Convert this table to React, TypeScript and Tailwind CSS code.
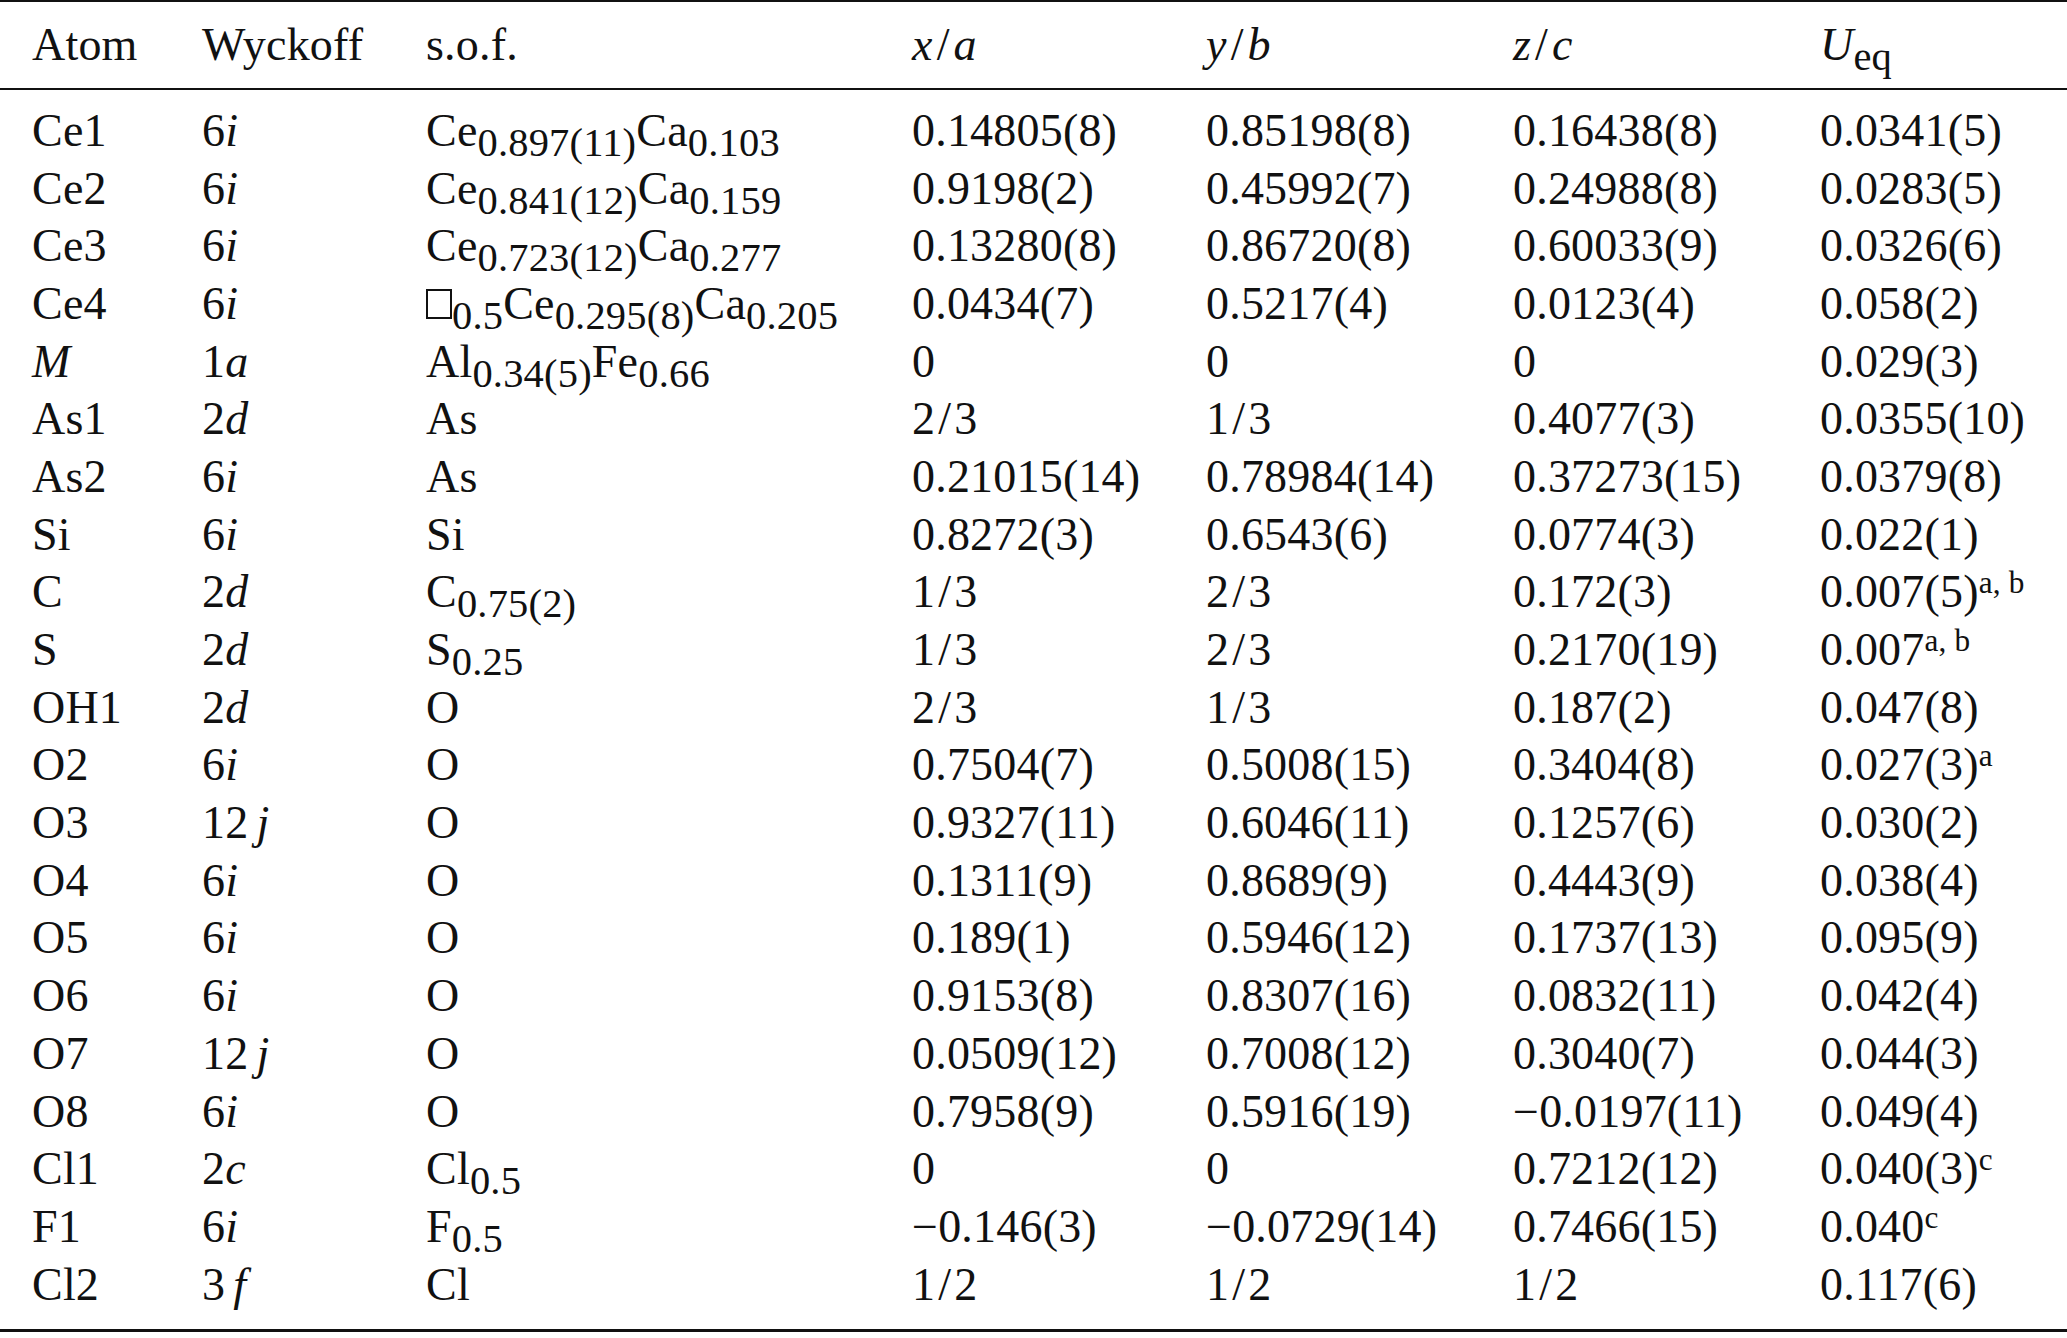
import React from "react"

type Part = [string, string?]
type Row = {
  atom: string
  italicAtom?: boolean
  wyck: [string, string]
  sof: (Part | "box")[]
  x: string
  y: string
  z: string
  u: string
  sup?: string
}

const rows: Row[] = [
  { atom: "Ce1", wyck: ["6", "i"], sof: [["Ce", "0.897(11)"], ["Ca", "0.103"]], x: "0.14805(8)", y: "0.85198(8)", z: "0.16438(8)", u: "0.0341(5)" },
  { atom: "Ce2", wyck: ["6", "i"], sof: [["Ce", "0.841(12)"], ["Ca", "0.159"]], x: "0.9198(2)", y: "0.45992(7)", z: "0.24988(8)", u: "0.0283(5)" },
  { atom: "Ce3", wyck: ["6", "i"], sof: [["Ce", "0.723(12)"], ["Ca", "0.277"]], x: "0.13280(8)", y: "0.86720(8)", z: "0.60033(9)", u: "0.0326(6)" },
  { atom: "Ce4", wyck: ["6", "i"], sof: ["box", ["Ce", "0.295(8)"], ["Ca", "0.205"]], x: "0.0434(7)", y: "0.5217(4)", z: "0.0123(4)", u: "0.058(2)" },
  { atom: "M", italicAtom: true, wyck: ["1", "a"], sof: [["Al", "0.34(5)"], ["Fe", "0.66"]], x: "0", y: "0", z: "0", u: "0.029(3)" },
  { atom: "As1", wyck: ["2", "d"], sof: [["As"]], x: "2/3", y: "1/3", z: "0.4077(3)", u: "0.0355(10)" },
  { atom: "As2", wyck: ["6", "i"], sof: [["As"]], x: "0.21015(14)", y: "0.78984(14)", z: "0.37273(15)", u: "0.0379(8)" },
  { atom: "Si", wyck: ["6", "i"], sof: [["Si"]], x: "0.8272(3)", y: "0.6543(6)", z: "0.0774(3)", u: "0.022(1)" },
  { atom: "C", wyck: ["2", "d"], sof: [["C", "0.75(2)"]], x: "1/3", y: "2/3", z: "0.172(3)", u: "0.007(5)", sup: "a,b" },
  { atom: "S", wyck: ["2", "d"], sof: [["S", "0.25"]], x: "1/3", y: "2/3", z: "0.2170(19)", u: "0.007", sup: "a,b" },
  { atom: "OH1", wyck: ["2", "d"], sof: [["O"]], x: "2/3", y: "1/3", z: "0.187(2)", u: "0.047(8)" },
  { atom: "O2", wyck: ["6", "i"], sof: [["O"]], x: "0.7504(7)", y: "0.5008(15)", z: "0.3404(8)", u: "0.027(3)", sup: "a" },
  { atom: "O3", wyck: ["12", "j"], sof: [["O"]], x: "0.9327(11)", y: "0.6046(11)", z: "0.1257(6)", u: "0.030(2)" },
  { atom: "O4", wyck: ["6", "i"], sof: [["O"]], x: "0.1311(9)", y: "0.8689(9)", z: "0.4443(9)", u: "0.038(4)" },
  { atom: "O5", wyck: ["6", "i"], sof: [["O"]], x: "0.189(1)", y: "0.5946(12)", z: "0.1737(13)", u: "0.095(9)" },
  { atom: "O6", wyck: ["6", "i"], sof: [["O"]], x: "0.9153(8)", y: "0.8307(16)", z: "0.0832(11)", u: "0.042(4)" },
  { atom: "O7", wyck: ["12", "j"], sof: [["O"]], x: "0.0509(12)", y: "0.7008(12)", z: "0.3040(7)", u: "0.044(3)" },
  { atom: "O8", wyck: ["6", "i"], sof: [["O"]], x: "0.7958(9)", y: "0.5916(19)", z: "\u22120.0197(11)", u: "0.049(4)" },
  { atom: "Cl1", wyck: ["2", "c"], sof: [["Cl", "0.5"]], x: "0", y: "0", z: "0.7212(12)", u: "0.040(3)", sup: "c" },
  { atom: "F1", wyck: ["6", "i"], sof: [["F", "0.5"]], x: "\u22120.146(3)", y: "\u22120.0729(14)", z: "0.7466(15)", u: "0.040", sup: "c" },
  { atom: "Cl2", wyck: ["3", "f"], sof: [["Cl"]], x: "1/2", y: "1/2", z: "1/2", u: "0.117(6)" },
]

const grid = "grid grid-cols-[170px_224px_486px_294px_307px_307px_1fr] pl-[32px]"

function Sub({ children }: { children: React.ReactNode }) {
  return <span className="relative top-[10px] text-[0.88em] leading-none">{children}</span>
}

function Frac({ v, italic }: { v: string; italic?: boolean }) {
  // fractions like 1/3 get a bit of room round the slash
  if (!v.includes("/")) return <>{v}</>
  const [a, b] = v.split("/")
  return (
    <span className={italic ? "italic" : ""}>
      {a}
      <span className="mx-[3px] not-italic">/</span>
      {b}
    </span>
  )
}

function Header({ a, b }: { a: string; b: string }) {
  return (
    <span className="italic">
      {a}
      <span className="mx-[4px] not-italic">/</span>
      {b}
    </span>
  )
}

export default function App() {
  return (
    <div className="min-h-screen w-full bg-white text-[#111] font-['Liberation_Serif','Times_New_Roman',serif] text-[46px] tracking-[0.2px]">
      <div className="border-t-2 border-b-[3px] border-[#111]">
        <div className={`${grid} h-[88px] items-center border-b-2 border-[#111] leading-none`}>
          <div>Atom</div>
          <div>Wyckoff</div>
          <div>s.o.f.</div>
          <div><Header a="x" b="a" /></div>
          <div><Header a="y" b="b" /></div>
          <div><Header a="z" b="c" /></div>
          <div>
            <span className="italic">U</span>
            <Sub>eq</Sub>
          </div>
        </div>

        <div className="pt-[12px] pb-[16px]">
          {rows.map((r) => (
            <div key={r.atom} className={`${grid} h-[57.7px] items-center leading-none whitespace-nowrap`}>
              <div className={r.italicAtom ? "italic" : ""}>{r.atom}</div>
              <div>
                {r.wyck[0]}
                {r.wyck[1] === "j" || r.wyck[1] === "f" ? <span className="inline-block w-[8px]" /> : null}
                <span className="italic">{r.wyck[1]}</span>
              </div>
              <div>
                {r.sof.map((p, i) =>
                  p === "box" ? (
                    <span key={i}>
                      <span className="inline-block w-[26px] h-[30px] border-[2.5px] border-[#111] align-baseline" />
                      <Sub>0.5</Sub>
                    </span>
                  ) : (
                    <span key={i}>
                      {p[0]}
                      {p[1] ? <Sub>{p[1]}</Sub> : null}
                    </span>
                  )
                )}
              </div>
              <div><Frac v={r.x} /></div>
              <div><Frac v={r.y} /></div>
              <div><Frac v={r.z} /></div>
              <div>
                {r.u}
                {r.sup ? <span className="relative -top-[14px] text-[0.68em] leading-none">{r.sup.replace(",", ", ")}</span> : null}
              </div>
            </div>
          ))}
        </div>
      </div>
    </div>
  )
}
